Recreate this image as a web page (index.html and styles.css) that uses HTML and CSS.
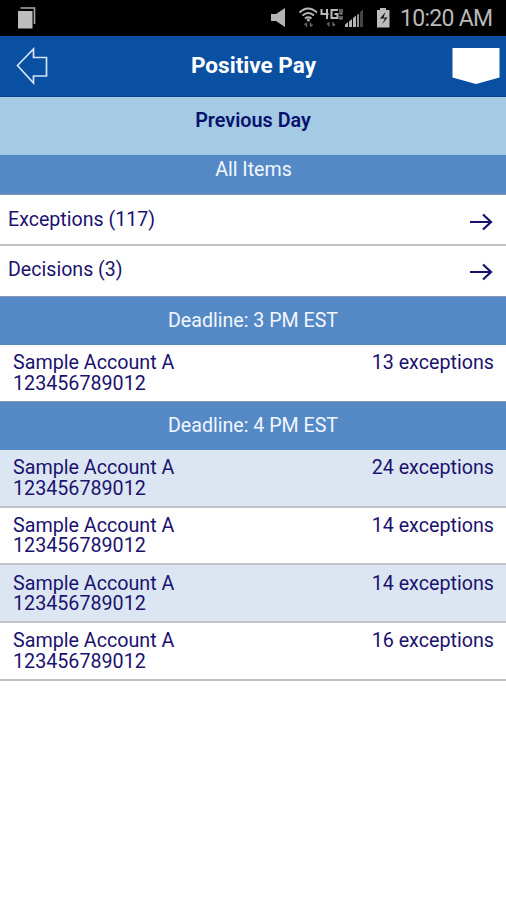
FILE: index.html
```html
<!DOCTYPE html>
<html lang="en">
<head>
<meta charset="utf-8">
<title>Positive Pay</title>
<link rel="stylesheet" href="styles.css">
</head>
<body>
<div class="status">
  <svg class="status-icons" viewBox="0 0 400 36" aria-hidden="true">
    <path d="M20.500 8H34.500V24" fill="none" stroke="#aaa" stroke-width="1.600"/>
    <rect x="18" y="11" width="14.500" height="17.500" fill="#bebebe"/>
    <path d="M271 14h5l9-6v19l-9-6h-5z" fill="#b5b5b5"/>
    <g fill="none" stroke="#b8b8b8" stroke-width="2">
      <path d="M299.500 12.500q8.500-8 17.500 0M302.500 15.500q6-5 11.500 0M305 18.500q3.200-2.500 6.500 0"/>
    </g>
    <circle cx="308.300" cy="20" r="1.500" fill="#b8b8b8"/>
    <path d="M306.500 27v-4m-2 2l2-2m4-.5v4m2-2l-2 2M329 26.500v-4m-2 2l2-2m4-.5v4m2-2l-2 2" fill="none" stroke="#666" stroke-width="1.400"/>
    <path d="M321.500 9v5h7m-1.500-5v10M338 10h-6.500v8h6v-4h-3" fill="none" stroke="#bbb" stroke-width="2"/>
    <path d="M340 9v5h2V9M340 16v3h2v-3" fill="none" stroke="#999" stroke-width="1.200"/>
    <path d="M345 27v-2.500l3-2.500v5zM349 27v-5.500l3-2.500v8zM353 27v-9l3-2.500v11.500z" fill="#b4b4b4"/>
    <path d="M357 27v-12l2-1.500v13.500z" fill="#999"/>
    <path d="M360 27V12l3-2.500v17.500z" fill="#444"/>
    <path d="M377 10h3V8h6v2h3.500v17.500H377z" fill="#bcbcbc"/>
    <path d="M385.500 12l-5.500 6.500h5l-3 6 5.500-7h-4z" fill="#111"/>
  </svg>
  <span class="time">10:20 AM</span>
</div>
<header class="bar">
  <svg class="back" viewBox="0 0 32 38" aria-hidden="true"><path d="M1.500 18.500L17.500 2v8.500h13v18.500h-13v7z" fill="none" stroke="#d4e2fa" stroke-width="1.700"/></svg>
  <h1 class="title">Positive Pay</h1>
  <svg class="badge" viewBox="0 0 48 38" aria-hidden="true"><path d="M.5 1H47.500V30.500L24 37 .5 30.500z" fill="#fff"/></svg>
</header>
<div class="day">Previous Day</div>
<div class="band all">All Items</div>
<nav class="links">
  <div class="link"><span>Exceptions (117)</span><svg class="arrow" viewBox="0 0 24 20" aria-hidden="true"><path d="M1 10h21M14 2.500L22 10l-8 7.500"/></svg></div>
  <div class="link"><span>Decisions (3)</span><svg class="arrow" viewBox="0 0 24 20" aria-hidden="true"><path d="M1 10h21M14 2.500L22 10l-8 7.500"/></svg></div>
</nav>
<div class="band">Deadline: 3 PM EST</div>
<div class="account first"><div>Sample Account A<br>123456789012</div><span>13 exceptions</span></div>
<div class="band">Deadline: 4 PM EST</div>
<div class="account tint"><div>Sample Account A<br>123456789012</div><span>24 exceptions</span></div>
<div class="account"><div>Sample Account A<br>123456789012</div><span>14 exceptions</span></div>
<div class="account tint"><div>Sample Account A<br>123456789012</div><span>14 exceptions</span></div>
<div class="account"><div>Sample Account A<br>123456789012</div><span>16 exceptions</span></div>
</body>
</html>
```
FILE: styles.css
```css
* { box-sizing: border-box; }
body {
  margin: 0;
  min-height: 900px;
  background: #fff;
  color: #1b126f;
  font: 19.7px/20.5px Roboto, sans-serif;
}
.status {
  display: flex;
  height: 36px;
  background: #000;
  color: #b8b8b8;
}
.status-icons { width: 400px; height: 36px; flex: none; }
.time { font-size: 23px; letter-spacing: -0.7px; line-height: 38px; white-space: nowrap; }
.bar {
  display: flex;
  align-items: center;
  justify-content: space-between;
  height: 61px;
  padding: 0 6px 0 16px;
  background: #0950a2;
  border-bottom: 1px solid #07458f;
}
.back { width: 32px; height: 38px; margin-right: 7px; }
.title { margin: 0; color: #fff; font-size: 22.6px; font-weight: 700; line-height: 26px; }
.badge { width: 48px; height: 38px; }
.day {
  height: 58px;
  padding-top: 14px;
  background: #a5cae4;
  color: #06126e;
  font-size: 19.8px;
  font-weight: 600;
  text-align: center;
}
.band {
  height: 48px;
  background: #5589c6;
  color: #f2f7ff;
  font-size: 19.6px;
  line-height: 48px;
  text-align: center;
}
.band.all { height: 40px; line-height: 30px; padding-left: 1px; border-bottom: 1px solid #8796b4; }
.link {
  display: flex;
  align-items: center;
  justify-content: space-between;
  height: 51px;
  padding: 1px 13px 0 8px;
  font-size: 19.6px;
  border-bottom: 2px solid #c2c2c2;
}
.link:last-child { padding-bottom: 2px; border-bottom: 1px solid #8796b4; }
.arrow {
  width: 24px;
  height: 20px;
  margin-top: 3px;
  fill: none;
  stroke: #17106c;
  stroke-width: 2.2;
}
.account {
  display: flex;
  justify-content: space-between;
  height: 57.7px;
  padding: 8.3px 12px 0 13px;
  border-bottom: 2px solid #c0c3c7;
}
.account.first { height: 57px; padding-top: 8px; border-bottom: 1px solid #8796a8; }
.tint { background: #dce6f2; }
```
